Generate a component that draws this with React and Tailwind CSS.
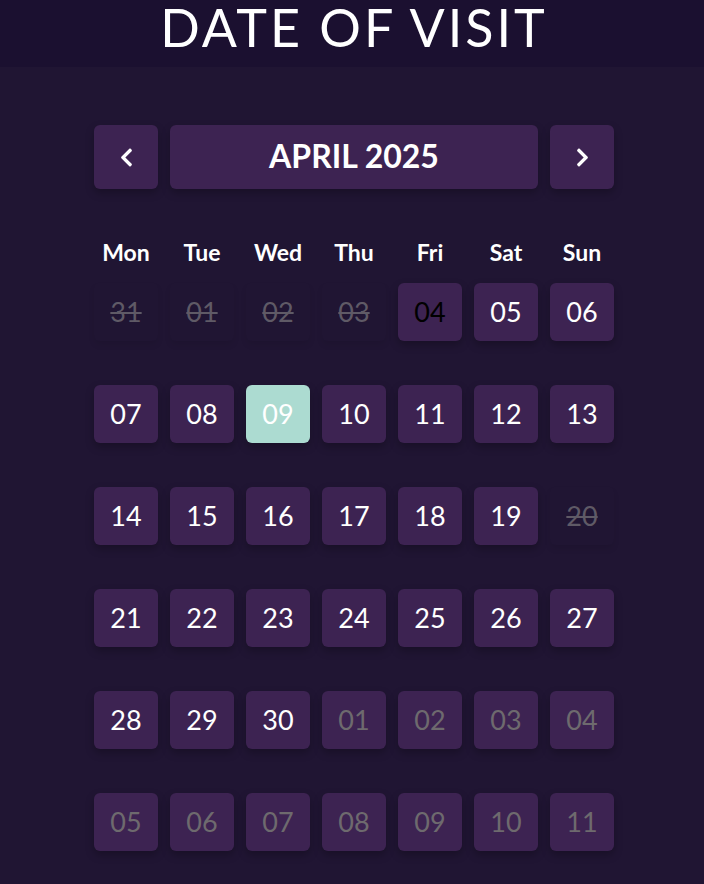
import React from "react";
import { FaChevronLeft, FaChevronRight } from "react-icons/fa";

const days = ["Mon", "Tue", "Wed", "Thu", "Fri", "Sat", "Sun"];

const cells = [
  ["31", "past"], ["01", "past"], ["02", "past"], ["03", "past"], ["04", "dark"], ["05", "on"], ["06", "on"],
  ["07", "on"], ["08", "on"], ["09", "sel"], ["10", "on"], ["11", "on"], ["12", "on"], ["13", "on"],
  ["14", "on"], ["15", "on"], ["16", "on"], ["17", "on"], ["18", "on"], ["19", "on"], ["20", "past"],
  ["21", "on"], ["22", "on"], ["23", "on"], ["24", "on"], ["25", "on"], ["26", "on"], ["27", "on"],
  ["28", "on"], ["29", "on"], ["30", "on"], ["01", "next"], ["02", "next"], ["03", "next"], ["04", "next"],
  ["05", "next"], ["06", "next"], ["07", "next"], ["08", "next"], ["09", "next"], ["10", "next"], ["11", "next"],
];

function Cell({ n, t }) {
  const base = "h-[58px] rounded-md flex items-center justify-center text-[27px]";
  if (t === "past")
    return (
      <div className={base + " text-[#5f5a66] line-through shadow-[0_4px_6px_rgba(0,0,0,0.08)]"}>{n}</div>
    );
  if (t === "sel")
    return <div className={base + " bg-[#acdbd1] text-white shadow-[0_4px_8px_rgba(0,0,0,0.25)]"}>{n}</div>;
  if (t === "dark")
    return <div className={base + " bg-[#3d2352] text-black shadow-[0_4px_8px_rgba(0,0,0,0.25)]"}>{n}</div>;
  if (t === "next")
    return <div className={base + " bg-[#3d2352] text-[#6e6a6e] shadow-[0_4px_8px_rgba(0,0,0,0.25)]"}>{n}</div>;
  return <div className={base + " bg-[#3d2352] text-white shadow-[0_4px_8px_rgba(0,0,0,0.25)]"}>{n}</div>;
}

export default function App() {
  return (
    <div className="w-[704px] h-[884px] bg-[#201533] overflow-hidden" style={{ fontFamily: "Lato, 'Noto Sans', sans-serif" }}>
      <div className="h-[67px] bg-[#1b1030] flex items-start justify-center">
        <div className="text-white text-[52px] leading-none pt-[1px] tracking-[3px] pl-[4px] font-normal">
          DATE OF VISIT
        </div>
      </div>
      <div className="w-[520px] ml-[94px] pt-[58px]">
        <div className="flex gap-3 h-[64px]">
          <div className="w-[64px] h-[64px] rounded-md bg-[#3d2352] flex items-center justify-center text-white shadow-[0_4px_8px_rgba(0,0,0,0.25)]">
            <FaChevronLeft size={21} />
          </div>
          <div className="flex-1 rounded-md bg-[#3d2352] flex items-center justify-center text-white text-[32px] font-bold shadow-[0_4px_8px_rgba(0,0,0,0.25)] pb-[2px]">
            APRIL 2025
          </div>
          <div className="w-[64px] h-[64px] rounded-md bg-[#3d2352] flex items-center justify-center text-white shadow-[0_4px_8px_rgba(0,0,0,0.25)]">
            <FaChevronRight size={21} />
          </div>
        </div>
        <div className="grid grid-cols-7 gap-x-3 mt-[46px] h-[30px]">
          {days.map((d) => (
            <div key={d} className="flex items-center justify-center text-white font-bold text-[23px]">
              {d}
            </div>
          ))}
        </div>
        <div className="grid grid-cols-7 gap-x-3 gap-y-[44px] mt-[18px]">
          {cells.map(([n, t], i) => (
            <Cell key={i} n={n} t={t} />
          ))}
        </div>
      </div>
    </div>
  );
}
